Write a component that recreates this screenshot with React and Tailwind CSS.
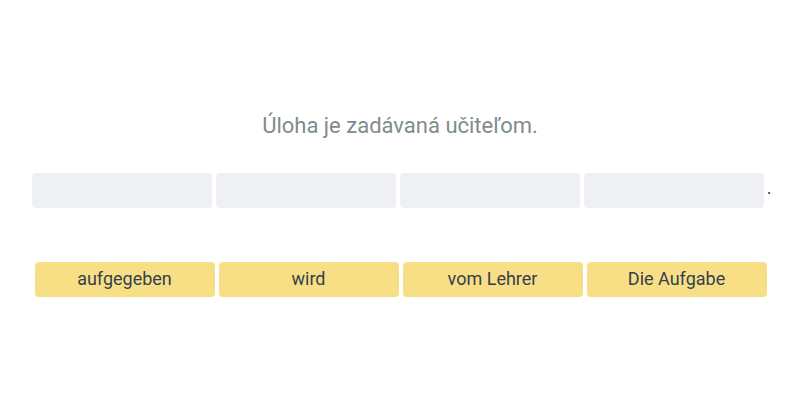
export default function App() {
  const words = ["aufgegeben", "wird", "vom Lehrer", "Die Aufgabe"];
  return (
    <div className="w-[800px] h-[400px] bg-white flex flex-col items-center" style={{ fontFamily: "Roboto, sans-serif" }}>
      <p className="mt-[113px] text-[22px] leading-[26px] text-[#7f8c8d]">Úloha je zadávaná učiteľom.</p>
      <div className="mt-[34px] flex items-center gap-1 pl-[3px]">
        {words.map((w) => (
          <div key={w} className="w-[180px] h-[35px] rounded bg-[#eff0f4]" />
        ))}
        <span className="relative -top-[3px] text-[18px] leading-[35px] text-[#374151] -ml-[1px]">.</span>
      </div>
      <div className="mt-[54px] flex gap-1 pl-[1px]">
        {words.map((w) => (
          <button key={w} className="w-[180px] h-[35px] pb-[3px] rounded bg-[#f8df86] text-[18px] text-[#34404c]">
            {w}
          </button>
        ))}
      </div>
    </div>
  );
}
